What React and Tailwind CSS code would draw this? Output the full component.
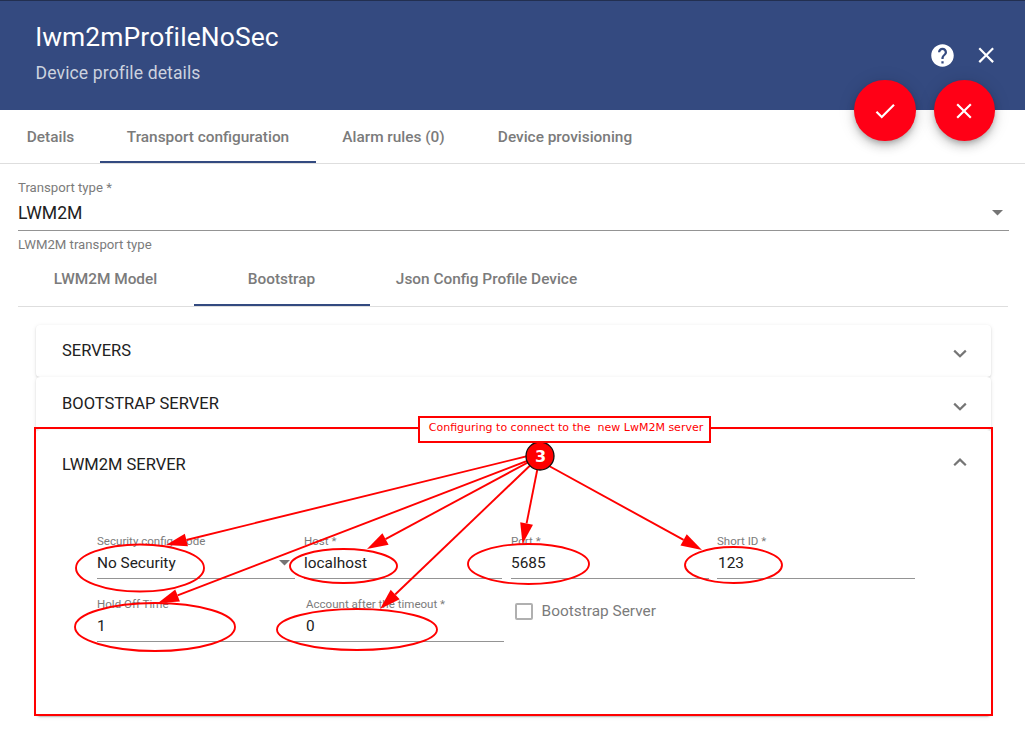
import React from "react";

const ICONS = {
  help: "M12 2C6.48 2 2 6.48 2 12s4.48 10 10 10 10-4.48 10-10S17.52 2 12 2zm1 17h-2v-2h2v2zm2.07-7.75l-.9.92C13.45 12.9 13 13.5 13 15h-2v-.5c0-1.1.45-2.1 1.17-2.83l1.24-1.26c.37-.36.59-.86.59-1.41 0-1.1-.9-2-2-2s-2 .9-2 2H8c0-2.21 1.79-4 4-4s4 1.79 4 4c0 .88-.36 1.68-.93 2.25z",
  close: "M19 6.41L17.59 5 12 10.59 6.41 5 5 6.41 10.59 12 5 17.59 6.41 19 12 13.41 17.59 19 19 17.59 13.41 12z",
  check: "M9 16.17L4.83 12l-1.42 1.41L9 19 21 7l-1.41-1.41z",
};

function Icon({ name, className }) {
  return (
    <svg viewBox="0 0 24 24" className={className} fill="currentColor">
      <path d={ICONS[name]} />
    </svg>
  );
}

function Tab({ label, active, className }) {
  return (
    <div
      className={`flex items-center justify-center border-b-2 ${active ? "border-[#334a80]" : "border-transparent"} ${className}`}
    >
      <span className="whitespace-nowrap text-[15.4px] font-medium text-[#7b7b7b]">{label}</span>
    </div>
  );
}

function Chevron({ up }) {
  return (
    <svg viewBox="0 0 14 9" className="h-[9px] w-[14px]" fill="none" stroke="#757575" strokeWidth="2.2">
      <path d={up ? "M1.2 7.2L7 1.6L12.8 7.2" : "M1.2 1.6L7 7.2L12.8 1.6"} />
    </svg>
  );
}

function Caret() {
  return (
    <svg viewBox="0 0 11 6" className="h-[6px] w-[11px]" fill="#757575">
      <path d="M0 0H11L5.5 5.5z" />
    </svg>
  );
}

function Field({ label, value, caret, className }) {
  return (
    <div className={`flex h-[46px] flex-col border-b border-[#949494] ${className}`}>
      <div className="h-4 whitespace-nowrap text-[11.55px] leading-4 text-[#7b7b7b]">{label}</div>
      <div className="flex h-[27px] items-center justify-between pr-[5px] text-[15.4px] text-[#212121]">
        <span className="pt-[2px]">{value}</span>
        {caret && <Caret />}
      </div>
    </div>
  );
}

const PANEL =
  "bg-white shadow-[0_3px_1px_-2px_rgba(0,0,0,0.12),0_1px_2px_0_rgba(0,0,0,0.12),0_1px_5px_0_rgba(0,0,0,0.08)]";

const ELLIPSES = [
  [140, 568, 64, 23.5],
  [343.5, 566, 53.5, 17],
  [528.5, 564, 60.5, 20],
  [733.5, 565, 48.5, 18],
  [155, 627, 80, 24],
  [357, 629.5, 80, 20.5],
];

const ARROWS = [
  [540, 453, 166, 545],
  [540, 456, 158, 603],
  [540, 456, 367, 549],
  [540, 456, 380, 609],
  [540, 456, 522.5, 544],
  [540, 461, 702, 550],
];

function Arrow({ points: [x1, y1, x2, y2] }) {
  const len = Math.hypot(x2 - x1, y2 - y1);
  const ux = (x2 - x1) / len;
  const uy = (y2 - y1) / len;
  const bx = x2 - ux * 21;
  const by = y2 - uy * 21;
  const head = `${x2},${y2} ${bx - uy * 6.5},${by + ux * 6.5} ${bx + uy * 6.5},${by - ux * 6.5}`;
  return (
    <g>
      <line x1={x1} y1={y1} x2={bx} y2={by} stroke="#f00" strokeWidth="1.9" />
      <polygon points={head} fill="#f00" />
    </g>
  );
}

export default function App() {
  return (
    <div className="relative h-[754px] w-[1025px] overflow-hidden bg-white font-['Roboto',sans-serif]">
      <header className="flex h-[110px] justify-between border-t border-[#222f50] bg-[#344a80] pl-[35.6px] pr-[25.4px] text-white">
        <div className="pt-5">
          <h1 className="text-[26.4px] leading-8 tracking-[0.12px]">lwm2mProfileNoSec</h1>
          <p className="mt-1 text-[17.6px] leading-8 tracking-[0.1px] text-[#ccd2df]">Device profile details</p>
        </div>
        <div className="flex h-[109px] items-center gap-[17.5px]">
          <Icon name="help" className="h-[27px] w-[27px]" />
          <Icon name="close" className="h-[26.4px] w-[26.4px]" />
        </div>
      </header>

      <nav className="flex h-[54px] border-b border-[#dedede]">
        <Tab label="Details" className="h-[53px] w-[101px] pt-[4px]" />
        <Tab label="Transport configuration" active className="-ml-px h-[53px] w-[216px] pt-[4px]" />
        <Tab label="Alarm rules (0)" className="h-[53px] w-[155px] pt-[4px]" />
        <Tab label="Device provisioning" className="h-[53px] w-[188px] pt-[4px]" />
      </nav>

      <main className="pl-[18px] pr-4">
        <div className="pt-4">
          <div className="h-4 text-[13.2px] leading-4 tracking-[-0.01px] text-[#7b7b7b]">Transport type *</div>
          <div className="flex h-[34px] items-center justify-between pr-[6px] text-[17.6px] text-[#212121]">
            <span>LWM2M</span>
            <Caret />
          </div>
          <div className="border-t border-[#949494]" />
          <div className="mt-[6px] h-4 text-[13.2px] leading-4 text-[#7b7b7b]">LWM2M transport type</div>
        </div>

        <nav className="mr-px flex h-[54px] border-b border-[#dedede]">
          <Tab label="LWM2M Model" className="h-[53px] w-[175px] pt-[2px]" />
          <Tab label="Bootstrap" active className="ml-px h-[53px] w-[176px] pr-px pt-[2px]" />
          <Tab label="Json Config Profile Device" className="h-[53px] w-[233px] pt-[2px]" />
        </nav>

        <section className="ml-[18px] mr-[18px] mt-[18px] text-[16.5px] text-[#212121]">
          <div className={`flex h-[52px] items-center justify-between rounded pl-[26px] pr-[23.6px] ${PANEL}`}>
            <span>SERVERS</span>
            <div className="pt-[5px]"><Chevron /></div>
          </div>
          <div className={`flex h-[53px] items-center justify-between rounded pl-[26px] pr-[23.6px] pt-px ${PANEL}`}>
            <span>BOOTSTRAP SERVER</span>
            <div className="pt-[5px]"><Chevron /></div>
          </div>
          <div className={`h-[286px] rounded pt-px ${PANEL}`}>
            <div className="flex h-[68px] items-center justify-between pl-[26px] pr-[23.6px]">
              <span>LWM2M SERVER</span>
              <div className="pb-[5px]"><Chevron up /></div>
            </div>
            <div className="flex gap-[9px] pl-[61px] pt-[34px]">
              <Field label="Security config mode" value="No Security" caret className="w-[198px]" />
              <Field label="Host *" value="localhost" className="w-[198px]" />
              <Field label="Port *" value="5685" className="w-[198px]" />
              <Field label="Short ID *" value={<span className="pl-px">123</span>} className="-ml-px w-[198px]" />
            </div>
            <div className="flex pl-[61px] pt-[17px]">
              <Field label="Hold Off Time" value="1" className="w-[209px]" />
              <Field label="Account after the timeout *" value="0" className="w-[198px]" />
              <div className="ml-[11px] flex h-[31px] items-center gap-[9px] text-[15.4px] text-[#7b7b7b]">
                <span className="h-[17.6px] w-[17.6px] rounded-[2px] border-2 border-[#b0b0b0]" />
                <span className="pt-px">Bootstrap Server</span>
              </div>
            </div>
          </div>
        </section>
      </main>

      <button className="absolute left-[854px] top-[79.6px] flex h-[61.6px] w-[61.6px] items-center justify-center rounded-full bg-[#ff0016] pt-px text-white shadow-[0_3px_5px_-1px_rgba(0,0,0,0.2),0_6px_10px_0_rgba(0,0,0,0.14),0_1px_18px_0_rgba(0,0,0,0.12)]">
        <Icon name="check" className="h-[26px] w-[26px]" />
      </button>
      <button className="absolute left-[933.6px] top-[79.6px] flex h-[61.6px] w-[61.6px] items-center justify-center rounded-full bg-[#ff0016] pt-px text-white shadow-[0_3px_5px_-1px_rgba(0,0,0,0.2),0_6px_10px_0_rgba(0,0,0,0.14),0_1px_18px_0_rgba(0,0,0,0.12)]">
        <Icon name="close" className="h-[26px] w-[26px]" />
      </button>

      <div className="absolute left-[34px] top-[427px] h-[289px] w-[959px] border-2 border-[#f00]" />
      <svg className="absolute inset-0" width="1025" height="754" viewBox="0 0 1025 754">
        {ARROWS.map((a, i) => (
          <Arrow key={i} points={a} />
        ))}
        {ELLIPSES.map(([cx, cy, rx, ry], i) => (
          <ellipse key={i} cx={cx} cy={cy} rx={rx} ry={ry} fill="none" stroke="#f00" strokeWidth="1.9" />
        ))}
        <circle cx="540" cy="456" r="14" fill="#f00" stroke="#111" strokeWidth="1.3" />
      </svg>
      <div className="absolute left-[418px] top-[416px] flex h-[27px] w-[293px] justify-center whitespace-pre border-2 border-[#f00] bg-white pl-[3px] pt-[2px] font-['DejaVu_Sans',sans-serif] text-[11px] leading-[15px] text-[#f00]">
        {"Configuring to connect to the  new LwM2M server"}
      </div>
      <div className="absolute left-[526.5px] top-[447px] w-7 text-center font-['DejaVu_Sans',sans-serif] text-[16px] font-bold leading-5 text-white">
        3
      </div>
    </div>
  );
}
